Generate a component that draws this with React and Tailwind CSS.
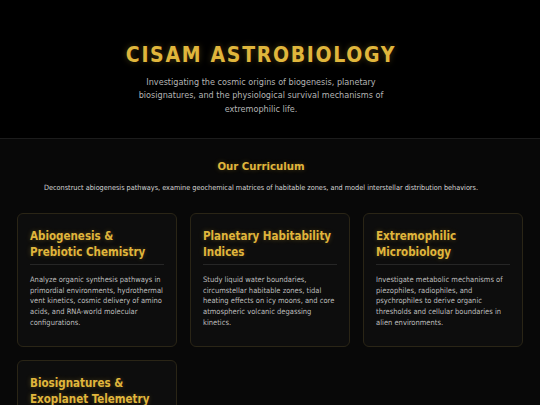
import React from 'react';

const courses = [
  {
    title: 'Abiogenesis & Prebiotic Chemistry',
    body: 'Analyze organic synthesis pathways in primordial environments, hydrothermal vent kinetics, cosmic delivery of amino acids, and RNA-world molecular configurations.',
  },
  {
    title: 'Planetary Habitability Indices',
    body: 'Study liquid water boundaries, circumstellar habitable zones, tidal heating effects on icy moons, and core atmospheric volcanic degassing kinetics.',
  },
  {
    title: 'Extremophilic Microbiology',
    body: 'Investigate metabolic mechanisms of piezophiles, radiophiles, and psychrophiles to derive organic thresholds and cellular boundaries in alien environments.',
  },
  {
    title: 'Biosignatures & Exoplanet Telemetry',
    body: 'Decode spectroscopic atmospheric signatures, disequilibrium gas ratios, and remote sensing telemetry from distant exoplanetary systems.',
  },
];

function App() {
  return (
    <div className="min-h-screen bg-[#080808] font-['DejaVu_Sans_Condensed','DejaVu_Sans',sans-serif]">
      <header className="bg-black border-b border-[#1c1c1c] pt-[41px] pb-[22px] pr-[18px] text-center">
        <h1 className="text-[21px] leading-[28px] font-bold tracking-[1.7px] text-[#e0b63c] [text-shadow:0_0_6px_rgba(224,182,60,0.3)]">
          CISAM ASTROBIOLOGY
        </h1>
        <p className="mt-[7px] mx-auto max-w-[250px] text-[9px] leading-[13.3px] text-[#b4b4b4]">
          Investigating the cosmic origins of biogenesis, planetary biosignatures, and the physiological survival mechanisms of extremophilic life.
        </p>
      </header>

      <section className="px-[17px] pt-[20px] pb-8">
        <div className="pr-[18px] text-center">
          <h2 className="text-[11.3px] leading-[16px] font-bold text-[#e0b63c] [text-shadow:0_0_5px_rgba(224,182,60,0.3)]">
            Our Curriculum
          </h2>
          <p className="mt-[8px] text-[7.25px] text-[#d4d4d4]">
            Deconstruct abiogenesis pathways, examine geochemical matrices of habitable zones, and model interstellar distribution behaviors.
          </p>
        </div>

        <div className="mt-[19px] grid grid-cols-3 gap-[13px]">
          {courses.map((c) => (
            <div
              key={c.title}
              className="rounded-[6px] border border-[#2a2516] bg-[#0d0d0d] px-[12px] pt-[14px] pb-[17px]"
            >
              <h3 className="text-[11.5px] font-bold leading-[16px] text-[#e0b63c] [text-shadow:0_0_5px_rgba(224,182,60,0.3)]">
                {c.title}
              </h3>
              <div className="mt-[4px] mb-[10px] border-t border-[#262626]" />
              <p className="text-[7.5px] leading-[10.8px] text-[#bdbdbd]">{c.body}</p>
            </div>
          ))}
        </div>
      </section>
    </div>
  );
}

export default App;
